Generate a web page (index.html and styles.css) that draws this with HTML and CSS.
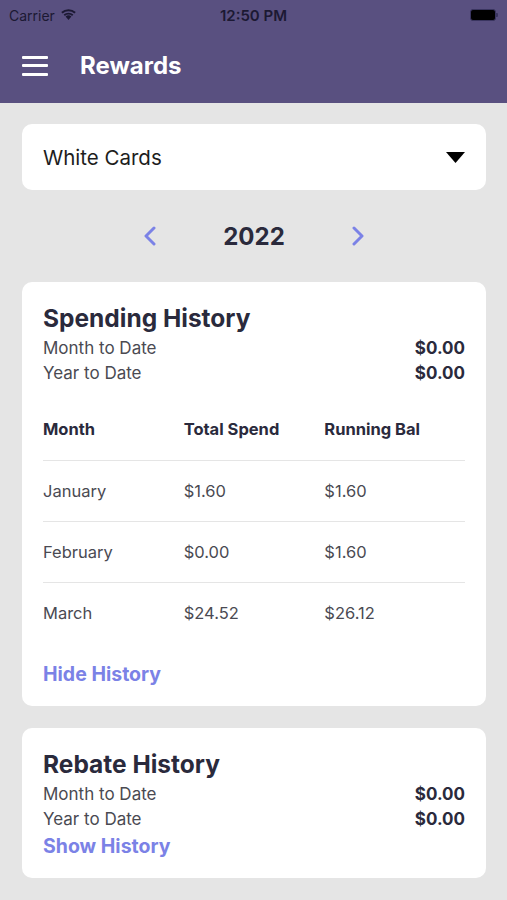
FILE: index.html
```html
<!DOCTYPE html>
<html lang="en">

<head>
    <meta charset="UTF-8">
    <meta name="viewport" content="width=device-width, initial-scale=1.0">
    <title>Rewards</title>
    <link rel="stylesheet" href="styles.css">
</head>

<body>
    <header class="top">
        <div class="status-bar">
            <div class="carrier">
                Carrier
                <svg class="wifi" width="17" height="12" viewBox="0 0 17 12">
                    <path d="M8.5 12 L5.6 8.6 A4.4 4.4 0 0 1 11.4 8.6 Z" fill="#1c1933"/>
                    <path d="M3.6 6.6 A7.2 7.2 0 0 1 13.4 6.6 L12.1 8 A5.3 5.3 0 0 0 4.9 8 Z" fill="#1c1933"/>
                    <path d="M1.2 4 A10.8 10.8 0 0 1 15.8 4 L14.4 5.5 A8.8 8.8 0 0 0 2.6 5.5 Z" fill="#1c1933"/>
                </svg>
            </div>
            <div class="clock">12:50 PM</div>
            <div class="battery">
                <span class="battery-body"></span>
                <span class="battery-tip"></span>
            </div>
        </div>
        <nav class="nav-bar">
            <button class="menu-btn" aria-label="Menu">
                <span></span>
                <span></span>
                <span></span>
            </button>
            <h1>Rewards</h1>
        </nav>
    </header>

    <main class="content">
        <div class="select-box">
            <span>White Cards</span>
            <svg width="19" height="11" viewBox="0 0 19 11">
                <path d="M0 0 H19 L9.5 11 Z" fill="#000"/>
            </svg>
        </div>

        <div class="year-row">
            <svg class="chevron" width="14" height="20" viewBox="0 0 14 20">
                <path d="M11 2 L3 10 L11 18" fill="none" stroke="#7b82e6" stroke-width="3" stroke-linecap="round" stroke-linejoin="round"/>
            </svg>
            <span class="year">2022</span>
            <svg class="chevron" width="14" height="20" viewBox="0 0 14 20">
                <path d="M3 2 L11 10 L3 18" fill="none" stroke="#7b82e6" stroke-width="3" stroke-linecap="round" stroke-linejoin="round"/>
            </svg>
        </div>

        <section class="card">
            <h2>Spending History</h2>
            <div class="summary-row">
                <span>Month to Date</span>
                <strong>$0.00</strong>
            </div>
            <div class="summary-row">
                <span>Year to Date</span>
                <strong>$0.00</strong>
            </div>

            <div class="history-table">
                <div class="table-row table-head">
                    <span>Month</span>
                    <span>Total Spend</span>
                    <span>Running Bal</span>
                </div>
                <div class="table-row">
                    <span>January</span>
                    <span>$1.60</span>
                    <span>$1.60</span>
                </div>
                <div class="table-row">
                    <span>February</span>
                    <span>$0.00</span>
                    <span>$1.60</span>
                </div>
                <div class="table-row">
                    <span>March</span>
                    <span>$24.52</span>
                    <span>$26.12</span>
                </div>
            </div>

            <a class="toggle-link spaced" href="#">Hide History</a>
        </section>

        <section class="card">
            <h2>Rebate History</h2>
            <div class="summary-row">
                <span>Month to Date</span>
                <strong>$0.00</strong>
            </div>
            <div class="summary-row">
                <span>Year to Date</span>
                <strong>$0.00</strong>
            </div>
            <a class="toggle-link" href="#">Show History</a>
        </section>
    </main>
</body>

</html>
```

FILE: styles.css
```css
body {
    font-family: 'Inter', 'Noto Sans', sans-serif;
    background-color: #e5e5e5;
    margin: 0;
    color: #2a2a3c;
}

.top {
    background-color: #595080;
    height: 103px;
}

.status-bar {
    height: 30px;
    display: flex;
    align-items: center;
    justify-content: space-between;
    padding: 0 9px;
    color: #1c1933;
    font-size: 14px;
}

.carrier {
    display: flex;
    align-items: center;
    gap: 5px;
    width: 120px;
}

.wifi {
    margin-top: -3px;
}

.clock {
    font-size: 15px;
    font-weight: 600;
}

.battery {
    width: 120px;
    display: flex;
    justify-content: flex-end;
    align-items: center;
}

.battery-body {
    width: 24px;
    height: 10px;
    background: #000;
    border: 1px solid #3a3560;
    border-radius: 3px;
}

.battery-tip {
    width: 2px;
    height: 4px;
    background: #3a3560;
    border-radius: 0 1px 1px 0;
}

.nav-bar {
    height: 73px;
    display: flex;
    align-items: center;
    padding: 0 22px;
}

.menu-btn {
    background: none;
    border: none;
    padding: 0;
    width: 26px;
    height: 20px;
    display: flex;
    flex-direction: column;
    justify-content: space-between;
    margin-right: 32px;
    margin-top: -2px;
}

.menu-btn span {
    display: block;
    height: 3px;
    background: #fff;
    border-radius: 1px;
}

.nav-bar h1 {
    color: #fff;
    font-size: 24px;
    font-weight: 700;
    margin: 0 0 2px;
}

.content {
    padding: 21px 21px 22px 22px;
}

.select-box {
    background: #fff;
    border-radius: 10px;
    height: 66px;
    display: flex;
    align-items: center;
    justify-content: space-between;
    padding: 0 21px;
    font-size: 20.5px;
    color: #1d1d1d;
}

.year-row {
    height: 92px;
    display: flex;
    align-items: center;
    justify-content: center;
    gap: 66px;
}

.year {
    font-size: 24px;
    font-weight: 700;
    color: #2a2a3c;
}

.chevron {
    margin-top: -1px;
}

.card {
    background: #fff;
    border-radius: 10px;
    padding: 21px 21px 20px;
    margin-bottom: 22px;
}

.card h2 {
    font-size: 24.5px;
    line-height: 30px;
    font-weight: 700;
    margin: 0 0 3px;
}

.summary-row {
    display: flex;
    justify-content: space-between;
    font-size: 17px;
    line-height: 25px;
    color: #4a4a52;
}

.summary-row strong {
    color: #2a2a3c;
    font-weight: 700;
}

.history-table {
    margin-top: 13px;
}

.table-row {
    display: grid;
    grid-template-columns: repeat(3, 1fr);
    height: 61px;
    align-items: center;
    font-size: 16.5px;
    color: #4a4a52;
    border-top: 1px solid #e5e5e5;
    box-sizing: border-box;
}

.table-head {
    border-top: none;
    font-weight: 700;
    color: #2a2a3c;
    padding-bottom: 2px;
}

.toggle-link {
    display: block;
    color: #7b82e6;
    font-size: 19.5px;
    font-weight: 700;
    line-height: 24px;
    text-decoration: none;
    margin-top: 2px;
}

.toggle-link.spaced {
    margin-top: 19px;
}
```
